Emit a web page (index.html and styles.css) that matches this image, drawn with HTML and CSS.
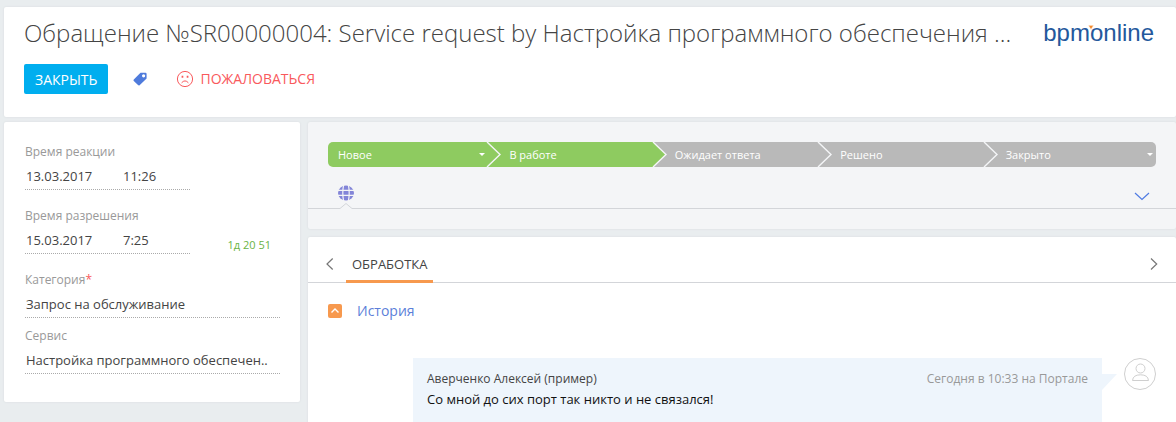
FILE: index.html
```html
<!DOCTYPE html>
<html lang="ru">
<head>
<meta charset="utf-8">
<title>Обращение №SR00000004</title>
<link rel="stylesheet" href="styles.css">
</head>
<body>
<div class="page">
  <header class="card page-header">
    <div class="header-main">
      <h1 class="title">Обращение №SR00000004: Service request by Настройка программного обеспечения ...</h1>
      <div class="actions">
        <button type="button" class="btn-primary">ЗАКРЫТЬ</button>
        <button type="button" class="btn-icon" aria-label="Теги">
          <svg width="14" height="14" viewBox="0 0 14 14"><path fill="#4f7bdc" fill-rule="evenodd" d="M7.5 0.8H12.4Q13.6 0.8 13.6 2V6.4L6.6 13.2Q5.8 13.8 5 13.1L0.8 9.1Q0 8.3 0.8 7.4ZM10.6 2.2A1.6 1.6 0 1 0 10.6 5.4A1.6 1.6 0 1 0 10.6 2.2Z"/></svg>
        </button>
        <button type="button" class="btn-complain">
          <svg width="18" height="18" viewBox="0 0 18 18" fill="none" stroke="#f9595c"><circle cx="9" cy="9" r="7.6"/><path d="M5.6 12.8Q9 9 12.4 12.8"/><path stroke-width="2" d="M5.6 6.7H7.3M10.7 6.7H12.4"/></svg>
          <span>ПОЖАЛОВАТЬСЯ</span>
        </button>
      </div>
    </div>
    <div class="logo" aria-label="bpm'online">bpm<span class="logo-mark"><svg width="6" height="5" viewBox="0 0 6 5"><path fill="#f58a2c" stroke="#fff" stroke-width="0.6" d="M0.3 0.3H5.7L3 4.7Z"/></svg></span>online</div>
  </header>

  <div class="columns">
    <aside class="card sidebar">
      <div class="field">
        <label for="react-date">Время реакции</label>
        <div class="datetime">
          <input id="react-date" class="date" value="13.03.2017">
          <input class="time" aria-label="Время реакции, часы" value="11:26">
        </div>
      </div>
      <div class="field">
        <label for="solve-date">Время разрешения</label>
        <div class="datetime-row">
          <div class="datetime">
            <input id="solve-date" class="date" value="15.03.2017">
            <input class="time" aria-label="Время разрешения, часы" value="7:25">
          </div>
          <span class="remaining">1д 20 51</span>
        </div>
      </div>
      <div class="field compact">
        <label for="category">Категория<span class="required">*</span></label>
        <input id="category" class="line" value="Запрос на обслуживание">
      </div>
      <div class="field compact">
        <label for="service">Сервис</label>
        <input id="service" class="line" value="Настройка программного обеспечен..">
      </div>
    </aside>

    <main class="content">
      <section class="card stages">
        <div class="stage-bar">
          <button type="button" class="stage done"><span>Новое</span><i class="caret"></i>
            <svg class="arrow to-done" viewBox="0 0 16 25"><path class="fill" d="M0 0H1L14 12.5L1 25H0Z"/><path class="edge" d="M1 0L14 12.5L1 25"/></svg></button>
          <button type="button" class="stage done"><span>В работе</span>
            <svg class="arrow" viewBox="0 0 16 25"><path class="fill" d="M0 0H1L14 12.5L1 25H0Z"/><path class="edge" d="M1 0L14 12.5L1 25"/></svg></button>
          <button type="button" class="stage"><span>Ожидает ответа</span>
            <svg class="arrow" viewBox="0 0 16 25"><path class="fill" d="M0 0H1L14 12.5L1 25H0Z"/><path class="edge" d="M1 0L14 12.5L1 25"/></svg></button>
          <button type="button" class="stage"><span>Решено</span>
            <svg class="arrow" viewBox="0 0 16 25"><path class="fill" d="M0 0H1L14 12.5L1 25H0Z"/><path class="edge" d="M1 0L14 12.5L1 25"/></svg></button>
          <button type="button" class="stage"><span>Закрыто</span><i class="caret"></i></button>
        </div>
        <div class="channels">
          <button type="button" class="channel" aria-label="Портал">
            <svg width="16" height="16" viewBox="0 0 16 16"><ellipse cx="8" cy="8" rx="8" ry="7.5" fill="#8385d8"/><path fill="none" stroke="#f4f5f7" stroke-width="1.2" d="M0 5.3H16M0 10.3H16M5.6 0Q4 8 5.6 16M10.4 0Q12 8 10.4 16"/></svg>
            <svg class="notch" width="14" height="7" viewBox="0 0 14 7"><path fill="#f4f5f7" d="M0.5 7V5.5L7 0.5L13.5 5.5V7Z"/><path fill="none" stroke="#d3d5d9" d="M0 5.5H1L7 0.5L13 5.5H14"/></svg>
          </button>
          <button type="button" class="expand" aria-label="Развернуть">
            <svg width="16" height="9" viewBox="0 0 16 9"><path fill="none" stroke="#4f7be3" stroke-width="1.2" d="M1 1L8 7.5L15 1"/></svg>
          </button>
        </div>
      </section>

      <section class="card details">
        <nav class="tabs">
          <button type="button" class="nav-arrow" aria-label="Назад"><svg width="8" height="14" viewBox="0 0 8 14"><path d="M6.7 1.5L1 7L6.7 12.5"/></svg></button>
          <button type="button" class="tab">ОБРАБОТКА</button>
          <button type="button" class="nav-arrow next" aria-label="Вперёд"><svg width="8" height="14" viewBox="0 0 8 14"><path d="M1 1.5L6.7 7L1 12.5"/></svg></button>
        </nav>
        <div class="group">
          <button type="button" class="collapse" aria-label="Свернуть"><svg width="14" height="14" viewBox="0 0 14 14"><path fill="none" stroke="#fff" stroke-width="1.4" d="M3.5 8.5L7 5L10.5 8.5"/></svg></button>
          <h2 class="group-title">История</h2>
        </div>
        <div class="message-row">
          <article class="message">
            <div class="message-head">
              <span class="author">Аверченко Алексей (пример)</span>
              <span class="when">Сегодня в 10:33 на Портале</span>
            </div>
            <p class="text">Со мной до сих порт так никто и не связался!</p>
            <svg class="tail" width="15" height="16" viewBox="0 0 15 16"><path fill="#eef5fc" d="M0 0H15L0 16Z"/></svg>
          </article>
          <svg class="avatar" width="32" height="32" viewBox="0 0 32 32" fill="none" stroke="#cfcfcf"><circle cx="16" cy="16" r="15.5"/><circle cx="16.5" cy="10.5" r="4.5"/><path d="M8.5 22.5Q9 16.8 16.5 16.8T24.5 22.5Z"/></svg>
        </div>
      </section>
    </main>
  </div>
</div>
</body>
</html>
```
FILE: styles.css
```css
* { box-sizing: border-box; }
body {
  margin: 0;
  background: #e9edef;
  color: #444;
  font-family: "Open Sans", "Noto Sans", sans-serif;
  font-size: 13px;
  overflow: hidden;
}
button, input {
  font: inherit;
  color: inherit;
  border: 0;
  padding: 0;
  margin: 0;
  background: none;
}
svg { display: block; flex: none; }
.page {
  height: 100vh;
  padding: 7px 0 0 4px;
  display: flex;
  flex-direction: column;
  gap: 5px;
}
.card {
  background: #fff;
  border-radius: 2px;
  box-shadow: 0 0 2px #d5d9dc;
}
.page-header {
  display: flex;
  justify-content: space-between;
  gap: 24px;
  padding: 8px 22px 23px 20px;
}
.header-main { min-width: 0; }
.title {
  margin: 0;
  font-size: 24px;
  line-height: 36px;
  font-weight: 300;
  color: #444;
  white-space: nowrap;
}
.actions {
  display: flex;
  align-items: center;
  margin-top: 13px;
}
.btn-primary {
  height: 30px;
  padding: 0 11px;
  border-radius: 2px;
  background: #00aeef;
  color: #fff;
  font-size: 14px;
}
.btn-icon { margin-left: 25px; }
.btn-complain {
  display: flex;
  align-items: center;
  gap: 6px;
  margin-left: 29px;
  padding-bottom: 1px;
  color: #f9595c;
  font-size: 14px;
}
.logo {
  flex: none;
  font-family: "Liberation Sans", Arial, sans-serif;
  font-size: 24px;
  line-height: 36px;
  color: #24589c;
}
.logo-mark { position: relative; }
.logo-mark svg {
  position: absolute;
  left: -2px;
  top: 6px;
}
.columns {
  flex: 1;
  display: flex;
  align-items: flex-start;
  gap: 8px;
}
.sidebar {
  flex: 0 0 296px;
  padding: 21px 20px 28px 21px;
}
.field { margin-bottom: 17px; }
.field label {
  display: block;
  font-size: 12px;
  line-height: 18px;
  color: #999;
}
.field input {
  height: 28px;
  padding: 2px 1px 0;
}
.datetime {
  display: flex;
  width: 165px;
  border-bottom: 1px dotted #aaa;
}
.date { width: 97px; }
.time { width: 68px; }
.datetime-row {
  display: flex;
  justify-content: space-between;
  align-items: flex-end;
}
.remaining {
  margin-right: 9px;
  font-size: 11px;
  line-height: 18px;
  color: #6ab344;
}
.field.compact { margin-bottom: 9px; }
.field.compact:last-child { margin-bottom: 0; }
.required { color: #f9595c; }
.field .line {
  display: block;
  width: 100%;
  height: 29px;
  border-bottom: 1px dotted #aaa;
}
.content {
  flex: 1;
  min-width: 0;
  align-self: stretch;
  display: flex;
  flex-direction: column;
  gap: 8px;
}
.stages {
  background: #f4f5f7;
  padding: 20px 0;
}
.stage-bar {
  display: flex;
  height: 25px;
  margin: 0 20px;
  border-radius: 5px;
  overflow: hidden;
}
.stage {
  position: relative;
  flex: 1 1 0;
  display: flex;
  align-items: center;
  justify-content: space-between;
  padding: 0 3px 0 15px;
  background: #b9b9b9;
  color: #fff;
  font-size: 11px;
}
.stage:first-child { padding: 0 9px 0 10px; }
.stage.done { background: #8ecb60; }
.caret {
  border: 3px solid transparent;
  border-top-color: #fff;
  border-bottom: 0;
}
.arrow {
  position: absolute;
  z-index: 1;
  top: 0;
  right: -8px;
  width: 16px;
  height: 25px;
  background: #b9b9b9;
}
.arrow.to-done { background: #8ecb60; }
.arrow .fill { fill: #b9b9b9; }
.done .arrow .fill { fill: #8ecb60; }
.arrow .edge {
  fill: none;
  stroke: #f4f5f7;
  stroke-width: 1.4;
}
.channels {
  display: flex;
  justify-content: space-between;
  align-items: center;
  height: 42px;
  padding: 10px 26px 0 30px;
  border-bottom: 1px solid #d3d5d9;
}
.channel { position: relative; }
.expand { padding-top: 8px; }
.notch {
  position: absolute;
  left: 1px;
  top: 18px;
}
.details {
  flex: 1;
}
.tabs {
  display: flex;
  align-items: center;
  height: 46px;
  border-bottom: 1px solid #d3d5d9;
  padding: 0 18px;
}
.nav-arrow { padding-top: 9px; }
.nav-arrow path {
  fill: none;
  stroke: #777;
  stroke-width: 1.2;
}
.next { margin-left: auto; }
.tab {
  align-self: flex-end;
  height: 37px;
  margin: 0 0 -1px 12px;
  padding: 2px 6px 0;
  border-bottom: 3px solid #f7994e;
  color: #444;
}
.group {
  display: flex;
  align-items: center;
  gap: 15px;
  padding: 18px 20px 0;
}
.collapse {
  border-radius: 2px;
  background: #f7994e;
}
.group-title {
  margin: 0;
  font-size: 14px;
  line-height: 20px;
  font-weight: 400;
  color: #5c7fd9;
}
.message-row {
  display: flex;
  align-items: flex-start;
  gap: 22px;
  padding: 37px 20px 0 105px;
}
.message {
  position: relative;
  flex: 1;
  min-height: 72px;
  padding: 11px 14px;
  background: #eef5fc;
}
.message-head {
  display: flex;
  justify-content: space-between;
  font-size: 12px;
  line-height: 20px;
}
.when { color: #999; }
.text {
  margin: 0;
  line-height: 20px;
  color: #111;
}
.tail {
  position: absolute;
  left: 100%;
  top: 16px;
}
```
